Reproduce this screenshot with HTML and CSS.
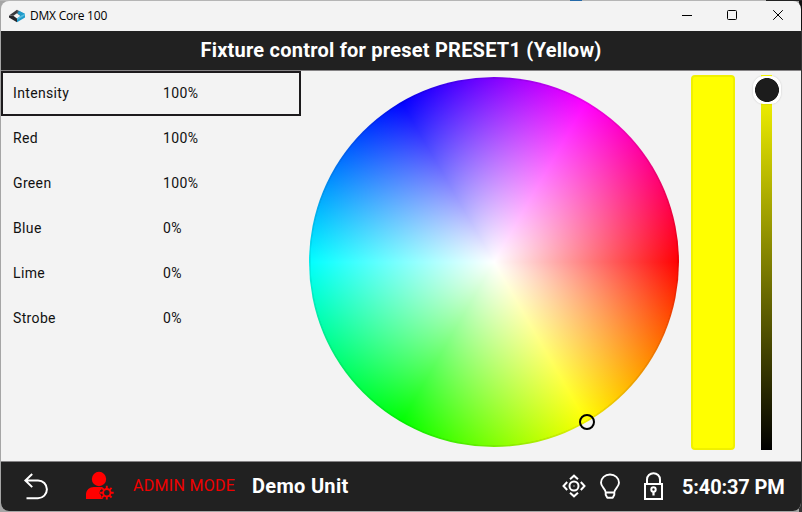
FILE: index.html
```html
<!DOCTYPE html>
<html lang="en">
<head>
<meta charset="utf-8">
<title>DMX Core 100</title>
<link rel="stylesheet" href="styles.css">
</head>
<body>
<div class="window">
  <div class="titlebar">
    <svg class="logo" width="16" height="14" viewBox="0 0 16 14">
      <path d="M0 6.500 8 .800v3.400L4.300 6.800z" fill="#3a3a3e"/>
      <path d="M0 6.800 4.300 6.800 8 9.500V13.200L0 8.600z" fill="#26262a"/>
      <path d="M8 .800l8 4.800-4.200 1.600L8 4.200z" fill="#4a5560"/>
      <path d="M10 1.800 16 4.800v3.600L8 13.200V9.500l3.700-2.700L8.500 4.400z" fill="#1f9bcb"/>
      <path d="M8 9.500l3.700-2.700L16 4.800v1.400L8 11z" fill="#56bde0"/>
    </svg>
    <span class="app-name">DMX Core 100</span>
    <div class="controls">
      <svg width="46" height="30" viewBox="0 0 46 30"><path d="M18 14.500h10" stroke="#000" fill="none"/></svg>
      <svg width="46" height="30" viewBox="0 0 46 30"><rect x="17.500" y="9.500" width="9" height="9" rx="1" stroke="#000" fill="none"/></svg>
      <svg width="46" height="30" viewBox="0 0 46 30"><path d="M17.200 9.200l9.600 9.600M26.800 9.200l-9.600 9.600" stroke="#000" fill="none"/></svg>
    </div>
  </div>
  <header class="header">Fixture control for preset PRESET1 (Yellow)</header>
  <main class="main">
    <div class="channels">
      <div class="channel selected"><span>Intensity</span><span>100%</span></div>
      <div class="channel"><span>Red</span><span>100%</span></div>
      <div class="channel"><span>Green</span><span>100%</span></div>
      <div class="channel"><span>Blue</span><span>0%</span></div>
      <div class="channel"><span>Lime</span><span>0%</span></div>
      <div class="channel"><span>Strobe</span><span>0%</span></div>
    </div>
    <div class="wheel"><div class="picker"></div></div>
    <div class="swatch"></div>
    <div class="slider"><div class="thumb"></div></div>
  </main>
  <footer class="footer">
    <svg class="back" width="26" height="28" viewBox="0 0 26 28" fill="none" stroke="#fff" stroke-width="2">
      <path d="M9.200 1 2.400 7.400l6.800 6.700M2.400 7.400H15a8.900 8.900 0 0 1 0 17.800H3.500"/>
    </svg>
    <svg class="user" width="30" height="30" viewBox="0 0 30 30">
      <circle cx="14" cy="8" r="7.200" fill="#f00"/>
      <path d="M1 28v-4.500C1 19 4.500 16 9 16h8.500l-1 2.500-1.500 1-.5 3 1.500 1.500.5 2.500 2 1.500z" fill="#f00"/>
      <circle cx="21.800" cy="21.700" r="3.700" fill="none" stroke="#f00" stroke-width="1.900"/>
      <path d="M21.800 18v-3.200M21.800 25.400v3.200M18.100 21.700h-3.200M25.500 21.700h3.200M19.200 19.100l-2.200-2.200M24.400 24.300l2.200 2.200M24.400 19.100l2.200-2.200M19.200 24.300l-2.200 2.200" stroke="#f00" stroke-width="1.900"/>
    </svg>
    <span class="mode">ADMIN MODE</span>
    <span class="unit">Demo Unit</span>
    <svg class="locate" width="24" height="24" viewBox="0 0 24 24" fill="none" stroke="#fff" stroke-width="2">
      <circle cx="12" cy="12" r="4.500"/><circle cx="12" cy="12" r="1" fill="#777" stroke="none"/>
      <path d="M8 5.200 12 1.700l4 3.500M8 18.800l4 3.500 4-3.500M5.200 8 1.500 12l3.700 4M18.800 8l3.700 4-3.700 4"/>
    </svg>
    <svg class="bulb" width="20" height="26" viewBox="0 0 20 26" fill="none" stroke="#fff" stroke-width="1.900" stroke-linejoin="round">
      <path d="M5.700 19.500C5.500 15.500 1 14 1 9.800 1 5 5 1.500 10 1.500s9 3.500 9 8.300c0 4.200-4.500 5.700-4.700 9.700zM5.700 19.500v2.300L7.300 24.700h5.400l1.600-2.900v-2.300"/>
    </svg>
    <svg class="lock" width="20" height="29" viewBox="0 0 20 29" fill="none" stroke="#fff" stroke-width="2">
      <path d="M1 12h17v15H1zM3 12V7.500a6.500 6.300 0 0 1 13 0V12"/>
      <circle cx="9.500" cy="17.500" r="2.200" stroke-width="2"/><path d="M9.500 19.500v4" stroke-width="2.200"/>
    </svg>
    <span class="clock">5:40:37 PM</span>
  </footer>
</div>
</body>
</html>
```
FILE: styles.css
```css
* { box-sizing: border-box; }
body {
  margin: 0;
  width: 802px;
  height: 512px;
  overflow: hidden;
  padding: 1px;
  background:
    linear-gradient(90deg, #b5b5b5 570px, #2469a8 570px, #2469a8 582px, #b5b5b5 582px, #b5b5b5 766px, #222 766px) top / 100% 1px no-repeat,
    linear-gradient(#111 30px, #333 30px) right / 3px 100% no-repeat,
    #a5a5a5;
  font-family: Roboto, sans-serif;
  color: #111;
}
.window {
  display: flex;
  flex-direction: column;
  width: 800px;
  height: 510px;
  border-radius: 8px;
  overflow: hidden;
  background: #f3f3f3;
}
.titlebar {
  display: flex;
  align-items: center;
  height: 30px;
  padding-left: 8px;
  flex: none;
}
.logo { margin-right: 5px; }
.app-name {
  font: 12px/16px "Open Sans", "Noto Sans", sans-serif;
  letter-spacing: -0.22px;
  color: #000;
}
.controls { display: flex; margin: 0 -1px 0 auto; }
.header {
  height: 40px;
  flex: none;
  background: #212121;
  border-bottom: 1px solid #858385;
  color: #fff;
  text-align: center;
  font-size: 20px;
  font-weight: 700;
  letter-spacing: 0.23px;
  line-height: 39px;
}
.main { display: flex; height: 390px; flex: none; }
.channels { width: 300px; flex: none; }
.channel {
  display: grid;
  grid-template-columns: 150px 1fr;
  align-items: center;
  height: 45px;
  padding: 0 10px 2px;
  border: 2px solid transparent;
  font-size: 14px;
  letter-spacing: 0.35px;
}
.channel.selected { border-color: #1c1a1c; }
.wheel {
  position: relative;
  width: 370px;
  height: 370px;
  margin: 6px 12px 0 8px;
  flex: none;
  border-radius: 50%;
  background:
    radial-gradient(circle closest-side, transparent 183px, rgba(0, 0, 0, 0.07) 183.5px),
    radial-gradient(circle closest-side, #fff, rgba(255, 255, 255, 0)),
    conic-gradient(from 90deg, #f00, #ff0, #0f0, #0ff, #00f, #f0f, #f00);
}
.picker {
  position: absolute;
  left: 270px;
  top: 337px;
  width: 16px;
  height: 16px;
  border: 2px solid #000;
  border-radius: 50%;
}
.swatch {
  width: 44px;
  height: 375px;
  margin-top: 4px;
  flex: none;
  background: #ff0;
  border: 2px solid #f0f000;
  border-radius: 4px;
}
.slider {
  position: relative;
  width: 11px;
  height: 375px;
  margin: 4px 0 0 26px;
  background: linear-gradient(#ff0, #000);
}
.thumb {
  position: absolute;
  left: -8px;
  top: 1px;
  width: 28px;
  height: 28px;
  border-radius: 11px;
  background: radial-gradient(circle, #1c1c1c 11.6px, #fff 12.3px);
  box-shadow: 0 0 2px rgba(0, 0, 0, 0.2);
}
.footer {
  display: flex;
  align-items: center;
  height: 50px;
  flex: none;
  padding-left: 22px;
  background: #212121;
  border-top: 1px solid #858385;
  color: #fff;
}
.footer span { white-space: nowrap; }
.back { margin-top: 1px; }
.user { margin: -2px 0 0 36px; }
.mode {
  width: 119px;
  margin: -2px 0 0 18px;
  font-size: 16px;
  letter-spacing: 0.3px;
  color: #f00000;
}
.unit {
  margin-top: -2px;
  font-size: 20px;
  font-weight: 700;
  letter-spacing: 0.3px;
}
.locate { margin: -2px 0 0 auto; }
.bulb { margin: -2px 0 0 14px; }
.lock { margin-left: 24px; }
.clock {
  width: 119px;
  margin: 1px 0 0 18px;
  font-size: 20px;
  font-weight: 700;
  letter-spacing: -0.14px;
}
```
